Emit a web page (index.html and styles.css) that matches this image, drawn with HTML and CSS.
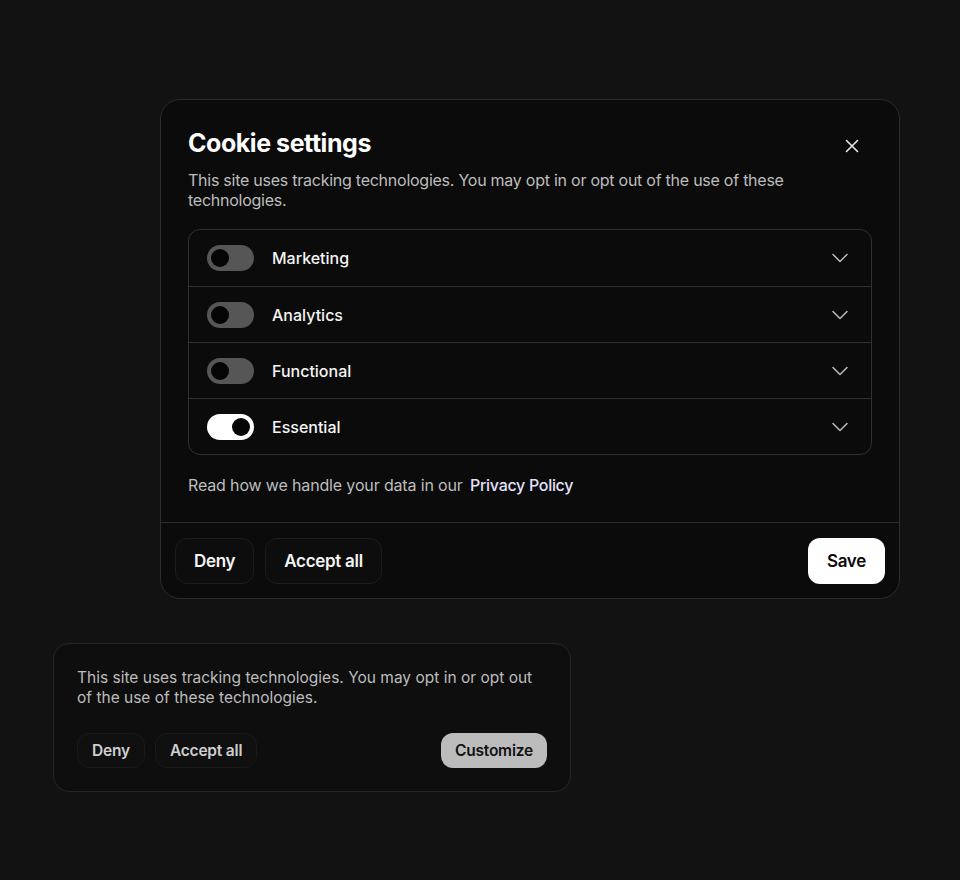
FILE: index.html
```html
<!DOCTYPE html>
<html lang="en">
<head>
<meta charset="utf-8">
<title>Cookie settings</title>
<link rel="stylesheet" href="styles.css">
</head>
<body>
<div class="page">
  <section class="modal">
    <div class="modal-body">
      <div class="modal-head">
        <h1 class="title">Cookie settings</h1>
        <button class="close" aria-label="Close">
          <svg width="14" height="14" viewBox="0 0 14 14"><path d="M1.5 1.5L12.5 12.5M12.5 1.5L1.5 12.5" stroke="#e8e8e8" stroke-width="1.6" stroke-linecap="round"/></svg>
        </button>
      </div>
      <p class="desc">This site uses tracking technologies. You may opt in or opt out of the use of these technologies.</p>
      <div class="list">
        <div class="row">
          <span class="toggle"><span class="knob"></span></span>
          <span class="label">Marketing</span>
          <svg class="chev" width="16" height="10" viewBox="0 0 16 10"><path d="M1 1.5L8 8.5L15 1.5" fill="none" stroke="#bdbdbd" stroke-width="1.5" stroke-linecap="round" stroke-linejoin="round"/></svg>
        </div>
        <div class="row">
          <span class="toggle"><span class="knob"></span></span>
          <span class="label">Analytics</span>
          <svg class="chev" width="16" height="10" viewBox="0 0 16 10"><path d="M1 1.5L8 8.5L15 1.5" fill="none" stroke="#bdbdbd" stroke-width="1.5" stroke-linecap="round" stroke-linejoin="round"/></svg>
        </div>
        <div class="row">
          <span class="toggle"><span class="knob"></span></span>
          <span class="label">Functional</span>
          <svg class="chev" width="16" height="10" viewBox="0 0 16 10"><path d="M1 1.5L8 8.5L15 1.5" fill="none" stroke="#bdbdbd" stroke-width="1.5" stroke-linecap="round" stroke-linejoin="round"/></svg>
        </div>
        <div class="row">
          <span class="toggle on"><span class="knob"></span></span>
          <span class="label">Essential</span>
          <svg class="chev" width="16" height="10" viewBox="0 0 16 10"><path d="M1 1.5L8 8.5L15 1.5" fill="none" stroke="#bdbdbd" stroke-width="1.5" stroke-linecap="round" stroke-linejoin="round"/></svg>
        </div>
      </div>
      <p class="policy">Read how we handle your data in our <a class="policy-link" href="#">Privacy Policy</a></p>
    </div>
    <div class="modal-foot">
      <div class="foot-left">
        <button class="btn ghost">Deny</button>
        <button class="btn ghost">Accept all</button>
      </div>
      <button class="btn primary">Save</button>
    </div>
  </section>

  <section class="banner">
    <p class="banner-text">This site uses tracking technologies. You may opt in or opt out of the use of these technologies.</p>
    <div class="banner-actions">
      <div class="foot-left small-gap">
        <button class="btn small ghost">Deny</button>
        <button class="btn small ghost">Accept all</button>
      </div>
      <button class="btn small secondary">Customize</button>
    </div>
  </section>
</div>
</body>
</html>
```

FILE: styles.css
```css
* { box-sizing: border-box; }
html, body { margin: 0; padding: 0; }
body {
  background: #121212;
  font-family: Inter, "Noto Sans", "Liberation Sans", sans-serif;
  color: #f2f2f2;
  width: 960px;
  height: 880px;
  overflow: hidden;
}
.page {
  padding-top: 99px;
}
.modal {
  margin-left: 160px;
  width: 740px;
  background: #0b0b0b;
  border: 1px solid #2c2c2c;
  border-radius: 20px;
}
.modal-body {
  padding: 27px 27px 27px 27px;
}
.modal-head {
  display: flex;
  align-items: center;
  justify-content: space-between;
  height: 32px;
}
.title {
  margin: 0;
  font-size: 25px;
  font-weight: 700;
  letter-spacing: -0.45px;
  line-height: 32px;
  color: #ffffff;
}
.close {
  background: none;
  border: 0;
  padding: 0;
  width: 24px;
  height: 24px;
  display: flex;
  align-items: center;
  justify-content: center;
  margin-top: 5px;
  margin-right: 8px;
}
.desc {
  margin: 11px 0 0 0;
  font-size: 16px;
  line-height: 20px;
  color: #bdbdbd;
  letter-spacing: -0.25px;
  padding-right: 40px;
}
.list {
  margin-top: 19px;
  border: 1px solid #303030;
  border-radius: 12px;
}
.row {
  display: flex;
  align-items: center;
  height: 56px;
  padding: 0 23px 0 18px;
  border-top: 1px solid #303030;
}
.row:first-child { border-top: 0; }
.toggle {
  width: 47px;
  height: 26px;
  border-radius: 13px;
  background: #565656;
  display: flex;
  align-items: center;
  padding: 0 4px;
  flex-shrink: 0;
}
.knob {
  width: 18px;
  height: 18px;
  border-radius: 50%;
  background: #050505;
}
.toggle.on {
  background: #ffffff;
  justify-content: flex-end;
}
.label {
  margin-left: 18px;
  font-size: 16px;
  font-weight: 500;
  color: #f4f4f4;
  flex: 1;
}
.chev { flex-shrink: 0; }
.policy {
  margin: 20px 0 0 0;
  font-size: 16px;
  line-height: 20px;
  color: #bdbdbd;
  letter-spacing: -0.15px;
}
.policy-link {
  margin-left: 3px;
  color: #e4e2fb;
  font-weight: 500;
  letter-spacing: -0.3px;
  text-decoration: none;
}
.modal-foot {
  border-top: 1px solid #2c2c2c;
  padding: 15px 14px 14px 14px;
  display: flex;
  align-items: center;
  justify-content: space-between;
}
.foot-left {
  display: flex;
  gap: 11px;
}
.small-gap { gap: 10px; }
.btn {
  font-family: Inter, "Noto Sans", "Liberation Sans", sans-serif;
  font-size: 17px;
  font-weight: 600;
  letter-spacing: -0.3px;
  height: 46px;
  border-radius: 12px;
  padding: 0 18px;
  border: 1px solid transparent;
  cursor: pointer;
}
.btn.ghost {
  background: #0d0d0d;
  border-color: #1c1c1c;
  color: #f4f4f4;
}
.btn.primary {
  background: #ffffff;
  color: #0a0a0a;
  padding: 0 18px;
}
.banner {
  margin: 44px 0 0 53px;
  width: 518px;
  background: #0e0e0e;
  border: 1px solid #262626;
  border-radius: 16px;
  padding: 24px 23px 23px 23px;
}
.banner-text {
  margin: 0;
  font-size: 15.5px;
  line-height: 20px;
  color: #bdbdbd;
  letter-spacing: 0;
}
.banner-actions {
  margin-top: 25px;
  display: flex;
  align-items: center;
  justify-content: space-between;
}
.btn.small {
  font-size: 15.5px;
  height: 35px;
  border-radius: 12px;
  padding: 0 14px;
  letter-spacing: -0.2px;
}
.btn.small.ghost {
  color: #cfcfcf;
  background: #101010;
  border-color: #1a1a1a;
}
.btn.secondary {
  background: #bcbcbc;
  color: #111111;
  padding: 0 13px;
}
```
